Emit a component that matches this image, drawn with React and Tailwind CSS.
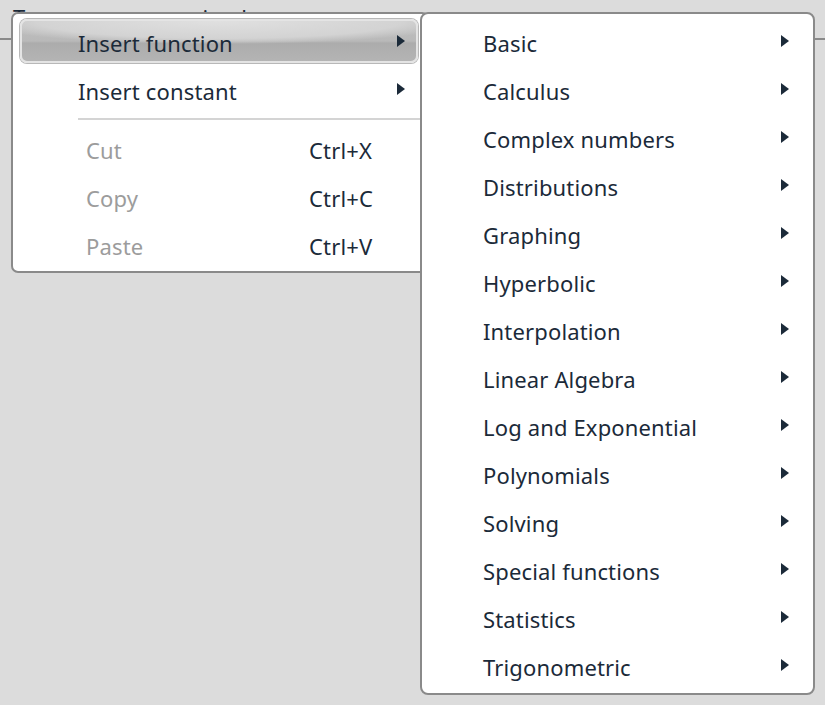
import React from "react";

const FONT = { fontFamily: '"Noto Sans", "Open Sans", sans-serif' };

function Arrow() {
  return (
    <svg width="8" height="12" viewBox="0 0 8 12" className="block shrink-0">
      <path d="M0 0 L8 6 L0 12 Z" fill="#1b2a39" />
    </svg>
  );
}

const subItems = [
  "Basic",
  "Calculus",
  "Complex numbers",
  "Distributions",
  "Graphing",
  "Hyperbolic",
  "Interpolation",
  "Linear Algebra",
  "Log and Exponential",
  "Polynomials",
  "Solving",
  "Special functions",
  "Statistics",
  "Trigonometric",
];

function SubRow({ label }) {
  return (
    <div className="h-[48px] flex items-center pl-[61px] pr-[24px]">
      <span className="flex-1 pt-[4px] leading-[44px]">{label}</span>
      <Arrow />
    </div>
  );
}

export default function App() {
  return (
    <div
      className="relative w-[825px] h-[705px] bg-[#dcdcdc] overflow-hidden text-[22px] tracking-[0.15px] text-[#1b2a39]"
      style={FONT}
    >
      <div className="h-[40px] border-b-2 border-[#8a8a8a] pl-[13px] pt-[5px] leading-[24px] text-[#1b2a39]">
        Type your expression here
      </div>

      {/* Main context menu */}
      <div className="absolute left-[11px] top-[12px] w-[418px] h-[261px] bg-white border-2 border-[#8a8a8a] rounded-[7px] pt-[3px] pl-[7px] flex flex-col">
        <div className="w-[398px] h-[48px] py-[2px]">
          <div className="h-[44px] rounded-[7px] border-2 border-[#e4e4e4] shadow-[0_0_0_1px_#b8b8b8] bg-[radial-gradient(ellipse_62%_58%_at_50%_0%,#e0e0e0_0%,#d3d3d3_75%,rgba(205,205,205,0)_100%),linear-gradient(180deg,#bebebe_0%,#b9b9b9_50%,#acacac_55%,#b4b4b4_100%)] flex items-center pl-[56px] pr-[11px]">
            <span className="flex-1 pt-[4px] leading-[36px]">Insert function</span>
            <Arrow />
          </div>
        </div>
        <div className="w-[398px] h-[48px] flex items-center pl-[58px] pr-[13px]">
          <span className="flex-1 pt-[4px] leading-[44px]">Insert constant</span>
          <Arrow />
        </div>
        <div className="h-[12px] flex items-center pl-[58px]">
          <div className="h-[2px] w-[345px] bg-[#d4d4d4]" />
        </div>
        {[
          ["Cut", "Ctrl+X"],
          ["Copy", "Ctrl+C"],
          ["Paste", "Ctrl+V"],
        ].map(([n, k]) => (
          <div
            key={n}
            className="w-[398px] h-[48px] flex items-center pl-[66px] pt-[3px] leading-[45px]"
          >
            <span className="w-[223px] text-[#9c9c9c]">{n}</span>
            <span>{k}</span>
          </div>
        ))}
      </div>

      {/* Submenu */}
      <div className="absolute left-[420px] top-[12px] w-[395px] h-[683px] bg-white border-2 border-[#8a8a8a] rounded-[8px] py-[3px] flex flex-col">
        {subItems.map((s) => (
          <SubRow key={s} label={s} />
        ))}
      </div>
    </div>
  );
}
